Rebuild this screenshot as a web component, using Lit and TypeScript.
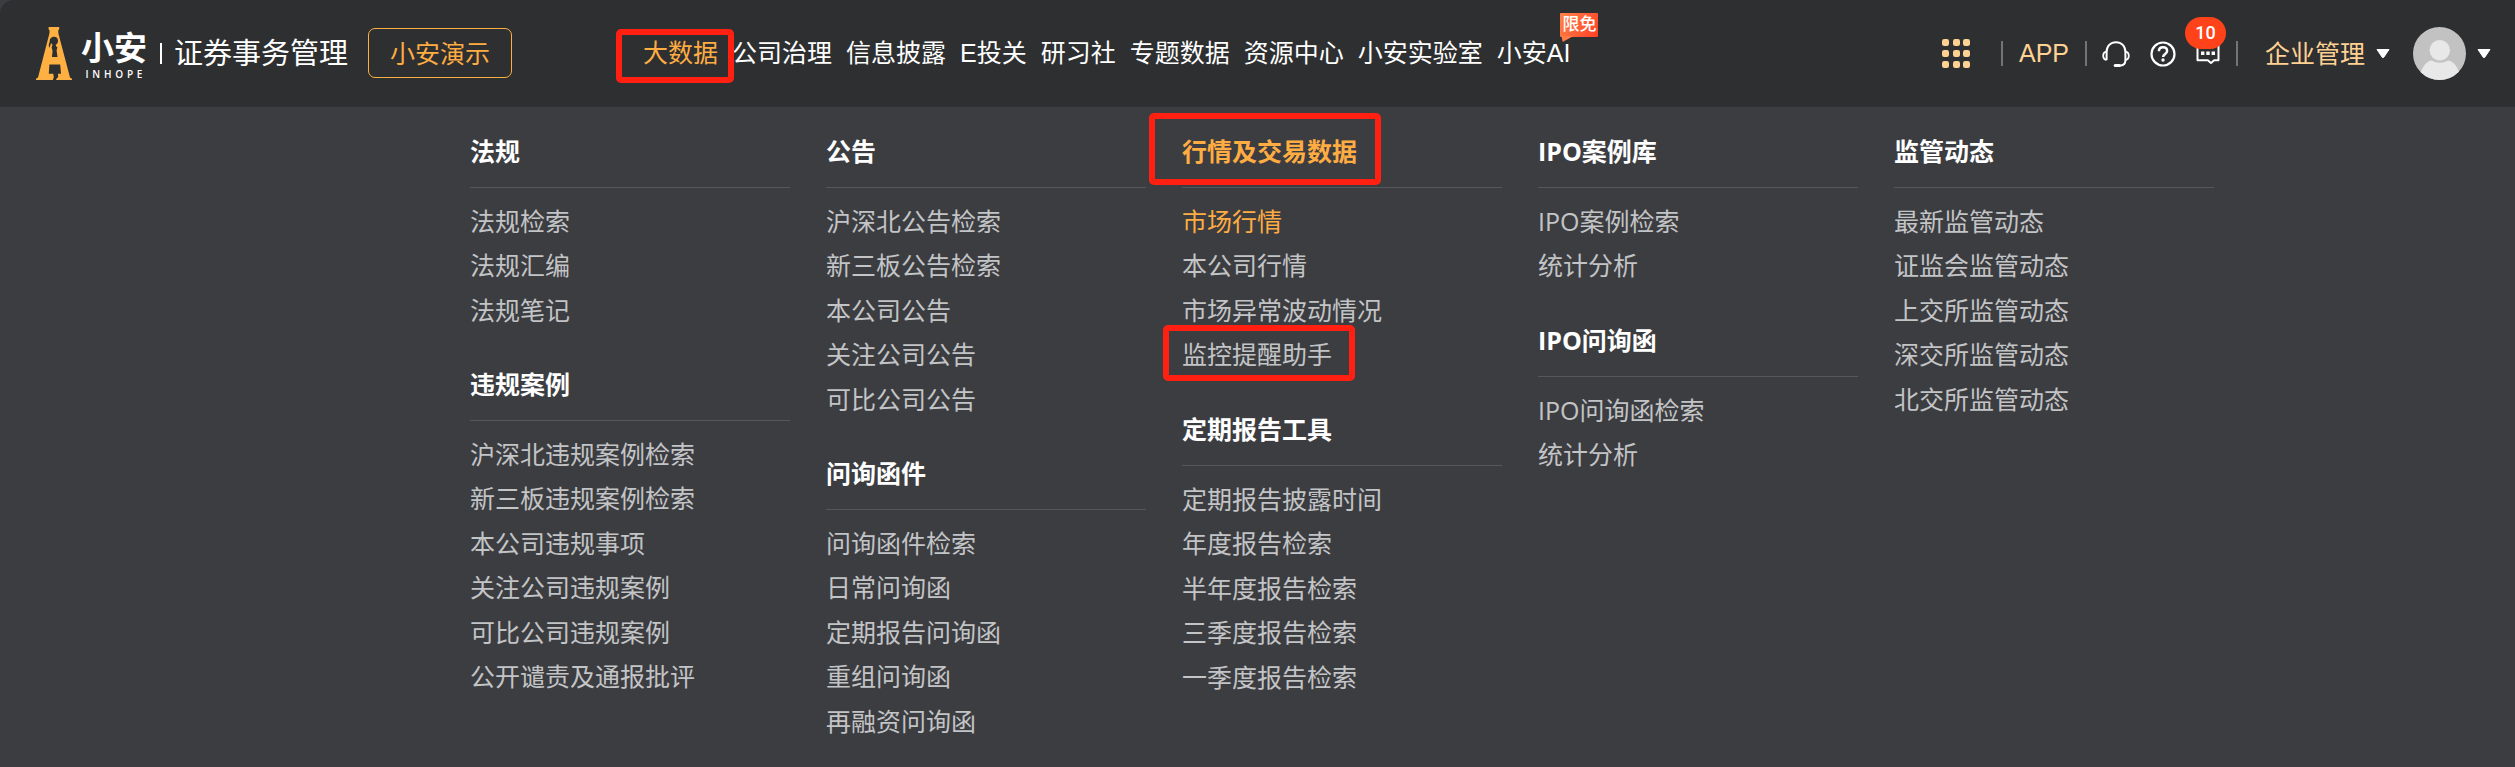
import { LitElement, html, css, svg, nothing } from "lit";
import { customElement, property } from "lit/decorators.js";
import { classMap } from "lit/directives/class-map.js";

interface Entry {
  text: string;
  active?: boolean;
  framed?: boolean;
}

interface Section extends Entry {
  items: Entry[];
}

const plain = (...names: string[]): Entry[] => names.map((text) => ({ text }));

const NAV: (Entry & { tag?: string })[] = [
  { text: "大数据", active: true, framed: true },
  ...plain("公司治理", "信息披露", "E投关", "研习社", "专题数据", "资源中心", "小安实验室"),
  { text: "小安AI", tag: "限免" },
];

const COLUMNS: Section[][] = [
  [
    { text: "法规", items: plain("法规检索", "法规汇编", "法规笔记") },
    {
      text: "违规案例",
      items: plain(
        "沪深北违规案例检索",
        "新三板违规案例检索",
        "本公司违规事项",
        "关注公司违规案例",
        "可比公司违规案例",
        "公开谴责及通报批评"
      ),
    },
  ],
  [
    {
      text: "公告",
      items: plain("沪深北公告检索", "新三板公告检索", "本公司公告", "关注公司公告", "可比公司公告"),
    },
    {
      text: "问询函件",
      items: plain("问询函件检索", "日常问询函", "定期报告问询函", "重组问询函", "再融资问询函"),
    },
  ],
  [
    {
      text: "行情及交易数据",
      active: true,
      framed: true,
      items: [
        { text: "市场行情", active: true },
        ...plain("本公司行情", "市场异常波动情况"),
        { text: "监控提醒助手", framed: true },
      ],
    },
    {
      text: "定期报告工具",
      items: plain("定期报告披露时间", "年度报告检索", "半年度报告检索", "三季度报告检索", "一季度报告检索"),
    },
  ],
  [
    { text: "IPO案例库", items: plain("IPO案例检索", "统计分析") },
    { text: "IPO问询函", items: plain("IPO问询函检索", "统计分析") },
  ],
  [
    {
      text: "监管动态",
      items: plain("最新监管动态", "证监会监管动态", "上交所监管动态", "深交所监管动态", "北交所监管动态"),
    },
  ],
];

const caret = html`<svg class="caret" width="14" height="9" viewBox="0 0 14 9" aria-hidden="true">
  <path d="M1 0.5h12L7.8 8.2q-.8 1-1.6 0z" fill="#fff" stroke="#fff" stroke-width="1" stroke-linejoin="round" />
</svg>`;

@customElement("menu-section")
export class MenuSection extends LitElement {
  @property({ attribute: false }) section!: Section;

  static styles = css`
    :host {
      display: block;
    }
    .title {
      margin: 0;
      padding-bottom: 18px;
      border-bottom: 1px solid #56575a;
      font-size: 25px;
      font-weight: 700;
      line-height: 36px;
      color: #fff;
    }
    .label {
      position: relative;
      display: inline-block;
    }
    .list {
      display: grid;
      grid-auto-rows: 44px 45px;
      margin: 0;
      padding: 11px 0 0;
      list-style: none;
    }
    .link {
      position: relative;
      display: inline-block;
      font-size: 25px;
      line-height: 44px;
      color: #c3c4c6;
      text-decoration: none;
      white-space: nowrap;
    }
    .active {
      color: #ffac42;
    }
    .framed::after {
      content: "";
      position: absolute;
      border: 6px solid #ff2012;
      border-radius: 5px;
      pointer-events: none;
    }
    .label.framed::after {
      inset: -20px -24px -16px -33px;
    }
    .link.framed::after {
      inset: -7px -23px -5px -19px;
    }
  `;

  private marks(entry: Entry) {
    return { active: !!entry.active, framed: !!entry.framed };
  }

  render() {
    const { section } = this;
    return html`
      <h2 class="title">
        <span class=${classMap({ label: true, ...this.marks(section) })}>${section.text}</span>
      </h2>
      <ul class="list">
        ${section.items.map(
          (item) => html`<li>
            <a class=${classMap({ link: true, ...this.marks(item) })} href="#">${item.text}</a>
          </li>`
        )}
      </ul>
    `;
  }
}

@customElement("app-root")
export class AppRoot extends LitElement {
  static styles = css`
    :host {
      display: block;
      min-height: 100vh;
      background: #3c3d41;
      font-family: "Open Sans", "Noto Sans CJK SC", sans-serif;
    }
    .bar {
      display: flex;
      align-items: center;
      box-sizing: border-box;
      height: 107px;
      padding: 0 24px 0 36px;
      border-top-left-radius: 14px;
      background: #2e2f31;
      white-space: nowrap;
    }
    .brand {
      display: flex;
      align-items: center;
      color: #fff;
      text-decoration: none;
    }
    .wordmark {
      display: flex;
      flex-direction: column;
      align-items: center;
      width: 66px;
      margin: 0 13px 0 9px;
      padding-top: 2px;
    }
    .name {
      font-size: 33px;
      font-weight: 700;
      line-height: 38px;
    }
    .latin {
      display: flex;
      justify-content: space-between;
      width: 57px;
      font-size: 10px;
      font-weight: 600;
      line-height: 14px;
    }
    .stroke {
      width: 2px;
      height: 21px;
      margin-right: 12px;
      background: #fff;
    }
    .product {
      padding-bottom: 2px;
      font-size: 29px;
      line-height: 40px;
    }
    .demo {
      box-sizing: border-box;
      height: 50px;
      margin: 0 0 1px 20px;
      padding: 0 21px;
      border: 1px solid #ffb042;
      border-radius: 7px;
      background: none;
      font: inherit;
      font-size: 25px;
      line-height: 46px;
      color: #ffac42;
    }
    .nav {
      display: flex;
      gap: 14px;
      margin-left: 131px;
      padding-bottom: 1px;
      font-family: "Liberation Sans", "Noto Sans CJK SC", sans-serif;
    }
    .nav-link {
      position: relative;
      font-size: 25px;
      line-height: 34px;
      color: #fff;
      text-decoration: none;
    }
    .active {
      color: #ffac42;
    }
    .framed::after {
      content: "";
      position: absolute;
      inset: -7px -16px -13px -27px;
      border: 6px solid #ff2012;
      border-radius: 5px;
      pointer-events: none;
      z-index: 1;
    }
    .nav-link.active {
      color: #ffac42;
    }
    .tag {
      position: absolute;
      right: -28px;
      bottom: 33px;
      padding: 0 2px;
      border-radius: 1px;
      background: linear-gradient(120deg, #ff8549, #ff3f25);
      font-size: 17px;
      font-weight: 500;
      line-height: 24px;
      color: #fff;
    }
    .tag::after {
      content: "";
      position: absolute;
      left: 1px;
      top: 23px;
      width: 12px;
      height: 6px;
      background: #ff7c46;
      clip-path: polygon(0 0, 100% 0, 10% 100%);
    }
    .tools {
      display: flex;
      align-items: center;
      margin-left: auto;
    }
    .icon {
      position: relative;
      display: flex;
      margin: 0;
      padding: 0;
      border: 0;
      background: none;
      font: inherit;
      color: #fff;
    }
    .rule {
      width: 2px;
      height: 25px;
      background: #737476;
    }
    .apps {
      margin-right: 31px;
    }
    .app-link {
      margin: 0 16px;
      padding-bottom: 1px;
      font-family: "Liberation Sans", sans-serif;
      font-size: 25px;
      line-height: 34px;
      color: #ffd193;
      text-decoration: none;
    }
    .group {
      display: flex;
      align-items: center;
      gap: 20px;
      margin: 0 16px 0 15px;
    }
    .badge {
      position: absolute;
      left: -11px;
      top: -24px;
      width: 41px;
      border-radius: 16px;
      background: #ff4219;
      font-family: Roboto, sans-serif;
      font-size: 18px;
      font-weight: 500;
      line-height: 32px;
      text-align: center;
    }
    .company {
      align-items: center;
      gap: 11px;
      margin: 0 23px 0 27px;
      padding-bottom: 1px;
      font-size: 25px;
      line-height: 34px;
      color: #ffd193;
    }
    .user {
      align-items: center;
      gap: 11px;
    }
    .menu {
      display: grid;
      grid-template-columns: repeat(5, minmax(0, 1fr));
      gap: 36px;
      padding: 26px 301px 0 470px;
    }
    .column {
      display: flex;
      flex-direction: column;
      gap: 34px;
    }
  `;

  private logo() {
    return html`<svg width="36" height="53" viewBox="0 0 36 53" aria-hidden="true">
      <path
        fill="#ffb042"
        d="M12.6 0h10.6v2.2l-1 1.2.2 3L34 50.6l2 1.2V53H20.2v-1l2-2-.3-3.2H25l-.8-9.2H13.4L12.800 46.800H17.300L17.800 50.200 16.800 53H0v-1.200l2-1.200L13.400 6.400l.2-3-1-1.200z"
      />
      <path
        fill="#2e2f31"
        d="M18 9.800c2.800 0 4.300 2 4 4.400-.1 1.800-1.300 2.900-2.200 3.600l.2 1.400 1.400 1-.8 3.200.9 6.600h-5.600l.7-6-1-3.600.9-2.600-1.500-1.800c-.5 1.800-.8 3.200-1.700 4.800-.8-2-.7-4 .3-5.600 0-3 1.400-5.400 4.400-5.400z"
      />
    </svg>`;
  }

  private dots() {
    return html`<svg width="28" height="29" viewBox="0 0 28 29" aria-hidden="true">
      ${[0, 11, 22].map((y) =>
        [0, 11, 21].map(
          (x) => svg`<rect x=${x} y=${y} width="7" height="7" rx="2.200" fill="#ffd193" />`
        )
      )}
    </svg>`;
  }

  private headset() {
    return html`<svg width="28" height="26" viewBox="0 0 28 26" fill="none" stroke="#fff" aria-hidden="true">
      <path stroke-width="2" d="M4.600 19V11C4.600 5 8.500 1.200 14 1.200S23.400 5 23.400 11v8c0 3.600-1.600 5.400-4.800 5.400" />
      <path stroke-width="1.800" d="M4.600 10.600C2.200 11 1.200 12.400 1.200 14.800s1 3.800 3.400 4.200M23.400 10.600c2.400.4 3.400 1.800 3.400 4.200s-1 3.800-3.400 4.200" />
      <path stroke-width="3" stroke-linecap="round" d="M13.200 24.400h4.400" />
    </svg>`;
  }

  private help() {
    return html`<svg width="26" height="26" viewBox="0 0 26 26" fill="none" stroke="#fff" aria-hidden="true">
      <circle cx="13" cy="13" r="11.500" stroke-width="2.200" />
      <path stroke-width="2.500" d="M8.900 10.300c0-2.600 1.700-4 4.100-4s4.100 1.400 4.100 3.600c0 3-4 3-4 6.200" />
      <circle cx="13" cy="19" r="1.700" fill="#fff" stroke="none" />
    </svg>`;
  }

  private message() {
    return html`<svg width="24" height="26" viewBox="0 0 24 26" fill="none" stroke="#fff" aria-hidden="true">
      <path stroke-width="2" stroke-linejoin="round" d="M1.500 3.500h21v15.800h-4.300L15 22l-3.200-2.700H1.500z" />
      <path fill="#fff" stroke="none" d="M5 10.500h3.400v3.400H5zM10.300 10.500h3.400v3.400h-3.400zM15.600 10.500H19v3.400h-3.400z" />
    </svg>`;
  }

  private avatar() {
    return html`<svg width="53" height="53" viewBox="0 0 53 53" aria-hidden="true">
      <clipPath id="disc"><circle cx="26.500" cy="26.500" r="26.500" /></clipPath>
      <g clip-path="url(#disc)">
        <rect width="53" height="53" fill="#c2c2c2" />
        <circle cx="26.800" cy="23.200" r="10.200" fill="#e8e8e8" />
        <path fill="#e8e8e8" d="M7 47c3-8 7-13 11.500-13.400q8.200 4.400 16.400 0C40 34 44 39 47 47v6H7z" />
      </g>
    </svg>`;
  }

  render() {
    return html`
      <header class="bar">
        <a class="brand" href="#">
          ${this.logo()}
          <span class="wordmark">
            <span class="name">小安</span>
            <span class="latin">${[..."INHOPE"].map((c) => html`<span>${c}</span>`)}</span>
          </span>
          <span class="stroke"></span>
          <span class="product">证券事务管理</span>
        </a>
        <button class="demo" type="button">小安演示</button>
        <nav class="nav">
          ${NAV.map(
            (n) => html`<a
              class=${classMap({ "nav-link": true, active: !!n.active, framed: !!n.framed })}
              href="#"
              >${n.text}${n.tag ? html`<span class="tag">${n.tag}</span>` : nothing}</a
            >`
          )}
        </nav>
        <div class="tools">
          <button class="icon apps" type="button" aria-label="应用">${this.dots()}</button>
          <span class="rule"></span>
          <a class="app-link" href="#">APP</a>
          <span class="rule"></span>
          <div class="group">
            <button class="icon" type="button" aria-label="客服">${this.headset()}</button>
            <button class="icon" type="button" aria-label="帮助">${this.help()}</button>
            <button class="icon" type="button" aria-label="消息">
              ${this.message()}<span class="badge">10</span>
            </button>
          </div>
          <span class="rule"></span>
          <button class="icon company" type="button">企业管理${caret}</button>
          <button class="icon user" type="button" aria-label="账户">${this.avatar()}${caret}</button>
        </div>
      </header>
      <main class="menu">
        ${COLUMNS.map(
          (sections) => html`<div class="column">
            ${sections.map((s) => html`<menu-section .section=${s}></menu-section>`)}
          </div>`
        )}
      </main>
    `;
  }
}
